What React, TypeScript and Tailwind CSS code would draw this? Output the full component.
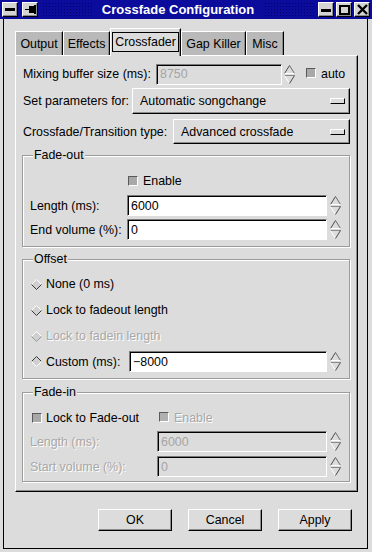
import type { ReactNode } from "react";

const raised =
  "border border-t-white border-l-white border-r-black border-b-black shadow-[inset_-1px_-1px_0_#8c8c8c]";

const Spin = ({ disabled }: { disabled?: boolean }) => (
  <svg width="11" height="21" viewBox="0 0 11 21" className="shrink-0">
    <path d="M0.5 9.5 L5.5 1.5" stroke={disabled ? "#9a9a9a" : "#4a4a4a"} fill="none" />
    <path d="M5.5 1.5 L10.5 9.5" stroke="#6a6a6a" fill="none" />
    <path d="M0.5 9.5 L10.5 9.5" stroke="#ffffff" fill="none" />
    <path d="M0.5 11.5 L10.5 11.5" stroke="#8a8a8a" fill="none" />
    <path d="M0.5 11.5 L5.5 19.5" stroke="#ffffff" fill="none" />
    <path d="M5.5 19.5 L10.5 11.5" stroke="#4a4a4a" fill="none" />
  </svg>
);

const Check = ({ disabled }: { disabled?: boolean }) => (
  <span
    className={`inline-block w-[10px] h-[10px] shrink-0 border border-t-[#5a5a5a] border-l-[#5a5a5a] border-r-white border-b-white ${
      disabled ? "bg-[#b0b0b0]" : "bg-[#a8a8a8]"
    }`}
  />
);

const Radio = ({ on, disabled }: { on?: boolean; disabled?: boolean }) => {
  const light = "#ffffff";
  const dark = disabled ? "#9a9a9a" : "#3a3a3a";
  return (
    <svg width="11" height="11" viewBox="0 0 11 11" className="shrink-0">
      <polygon points="5.5,0.5 10.5,5.5 5.5,10.5 0.5,5.5" fill="#d0d0d0" />
      <path d="M0.5 5.5 L5.5 0.5 L10.5 5.5" stroke={on ? dark : light} fill="none" />
      <path d="M0.5 5.5 L5.5 10.5 L10.5 5.5" stroke={on ? light : dark} fill="none" />
    </svg>
  );
};

const Entry = ({ value, w, disabled }: { value: string; w: string; disabled?: boolean }) => (
  <div
    className={`${w} h-[21px] shrink-0 flex items-center pl-[3px] border border-t-[#7a7a7a] border-l-[#7a7a7a] border-r-white border-b-white shadow-[inset_1px_1px_0_#000] ${
      disabled ? "bg-[#dcdcdc] text-[#a4a4a4]" : "bg-white text-black"
    }`}
  >
    {value}
  </div>
);

const OptionMenu = ({ label }: { label: string }) => (
  <div className={`flex-1 flex items-center justify-between pl-[7px] pr-[4px] ${raised}`}>
    <span>{label}</span>
    <span className={`w-[15px] h-[6px] ${raised} shadow-none`} />
  </div>
);

const Frame = ({ title, children, className }: { title: string; children: ReactNode; className?: string }) => (
  <fieldset
    className={`border border-[#9c9c9c] shadow-[1px_1px_0_#fff,inset_1px_1px_0_#fff] px-[7px] ${className ?? ""}`}
  >
    <legend className="ml-[3px] px-px bg-[#dcdcdc] leading-[14px]">{title}</legend>
    {children}
  </fieldset>
);

const dim = "text-[#a8a8a8] [text-shadow:1px_1px_0_#fff]";

const TitleButton = ({ children }: { children: ReactNode }) => (
  <div className={`w-[16px] h-[15px] bg-[#d4d4d4] flex items-center justify-center ${raised}`}>{children}</div>
);

const Tab = ({ label, w, active }: { label: string; w: string; active?: boolean }) =>
  active ? (
    <div
      className={`${w} relative z-10 -mb-px h-[28px] flex justify-center pt-[3px] bg-[#dcdcdc] border-l border-t border-r border-l-white border-t-white border-r-black shadow-[inset_-1px_0_0_#8c8c8c]`}
    >
      <div className="h-[20px] px-[2px] flex items-center border border-black">{label}</div>
    </div>
  ) : (
    <div
      className={`${w} h-[24px] flex items-center justify-center bg-[#b9b9b9] border-l border-t border-r border-l-white border-t-white border-r-black shadow-[inset_-1px_0_0_#8c8c8c]`}
    >
      {label}
    </div>
  );

export default function App() {
  return (
    <div className="w-[372px] h-[552px] flex flex-col bg-[#dcdcdc] text-[12.4px] leading-[14px] text-black font-['Liberation_Sans',Arial,sans-serif] overflow-hidden">
      {/* title bar */}
      <div className="h-[19px] shrink-0 flex items-center bg-[#0b0b9c] px-[2px] gap-[4px]">
        <TitleButton>
          <span className="w-[10px] h-[3px] bg-black" />
        </TitleButton>
        <TitleButton>
          <svg width="11" height="9" viewBox="0 0 11 9">
            <rect x="0" y="4" width="4" height="1" fill="#000" />
            <rect x="4" y="1" width="5" height="7" fill="#000" />
            <rect x="9" y="0" width="2" height="9" fill="#000" />
          </svg>
        </TitleButton>
        <div className="flex-1 h-[15px] bg-[radial-gradient(circle,#000070_0.9px,transparent_1px)] bg-[length:3px_3px]" />
        <div className="px-[6px] text-white font-bold text-[13px]">Crossfade Configuration</div>
        <div className="flex-1 h-[15px] bg-[radial-gradient(circle,#000070_0.9px,transparent_1px)] bg-[length:3px_3px]" />
        <div className="flex gap-[2px]">
          <TitleButton>
            <span className="w-[10px] h-[3px] bg-black mt-[2px]" />
          </TitleButton>
          <TitleButton>
            <span className="w-[11px] h-[10px] border-2 border-black" />
          </TitleButton>
          <TitleButton>
            <svg width="11" height="11" viewBox="0 0 11 11">
              <path d="M1 1 L10 10 M10 1 L1 10" stroke="#000" strokeWidth="2.4" />
            </svg>
          </TitleButton>
        </div>
      </div>

      {/* window body */}
      <div className="flex-1 flex flex-col border-l-[3px] border-r-[4px] border-b-[3px] border-[#dcdcdc]">
        <div className="flex-1 flex flex-col border-l border-r border-b border-black pl-[11px] pr-[9px] pt-[9px]">
          {/* notebook */}
          <div className="flex items-end h-[27px]">
            <Tab label="Output" w="w-[48px]" />
            <Tab label="Effects" w="w-[47px]" />
            <Tab label="Crossfader" w="w-[71px]" active />
            <Tab label="Gap Killer" w="w-[65px]" />
            <Tab label="Misc" w="w-[38px]" />
          </div>
          <div className="h-[437px] flex flex-col border border-t-white border-l-white border-r-black border-b-black shadow-[inset_-1px_-1px_0_#8c8c8c] pl-[6px] pr-[7px]">
            <div className="mt-[8px] h-[20px] flex items-center">
              <span className="w-[134px] pl-px">Mixing buffer size (ms):</span>
              <Entry value="8750" w="w-[126px]" disabled />
              <span className="ml-[2px]">
                <Spin />
              </span>
              <span className="ml-[11px]">
                <Check />
              </span>
              <span className="ml-[5px]">auto</span>
            </div>
            <div className="mt-[4px] h-[26px] flex items-stretch">
              <span className="w-[110px] pl-px self-center">Set parameters for:</span>
              <OptionMenu label="Automatic songchange" />
            </div>
            <div className="mt-[5px] h-[25px] flex items-stretch">
              <span className="w-[151px] pl-px self-center">Crossfade/Transition type:</span>
              <OptionMenu label="Advanced crossfade" />
            </div>

            <Frame title="Fade-out" className="mt-[4px] pb-[6px]">
              <div className="mt-[12px] h-[14px] flex items-center pl-[98px] gap-[5px]">
                <Check />
                <span>Enable</span>
              </div>
              <div className="mt-[7px] h-[21px] flex items-center">
                <span className="w-[97px]">Length (ms):</span>
                <Entry value="6000" w="w-[200px]" />
                <span className="ml-[3px]">
                  <Spin />
                </span>
              </div>
              <div className="mt-[3px] h-[21px] flex items-center">
                <span className="w-[97px]">End volume (%):</span>
                <Entry value="0" w="w-[200px]" />
                <span className="ml-[3px]">
                  <Spin />
                </span>
              </div>
            </Frame>

            <Frame title="Offset" className="mt-[5px] pb-[6px]">
              <div className="mt-[11px] h-[14px] flex items-center gap-[4px] pl-px">
                <Radio />
                <span>None (0 ms)</span>
              </div>
              <div className="mt-[12px] h-[14px] flex items-center gap-[4px] pl-px">
                <Radio />
                <span>Lock to fadeout length</span>
              </div>
              <div className="mt-[12px] h-[14px] flex items-center gap-[4px] pl-px">
                <Radio disabled />
                <span className={dim}>Lock to fadein length</span>
              </div>
              <div className="mt-[8px] h-[21px] flex items-center">
                <span className="w-[99px] flex items-center gap-[4px] pl-px">
                  <Radio on />
                  <span>Custom (ms):</span>
                </span>
                <Entry value="−8000" w="w-[198px]" />
                <span className="ml-[3px]">
                  <Spin />
                </span>
              </div>
            </Frame>

            <Frame title="Fade-in" className="mt-[6px] pb-[4px]">
              <div className="mt-[12px] h-[14px] flex items-center pl-[2px]">
                <Check />
                <span className="ml-[4px]">Lock to Fade-out</span>
                <span className="ml-[20px]">
                  <Check disabled />
                </span>
                <span className={`ml-[5px] ${dim}`}>Enable</span>
              </div>
              <div className="mt-[6px] h-[21px] flex items-center">
                <span className={`w-[127px] ${dim}`}>Length (ms):</span>
                <Entry value="6000" w="w-[170px]" disabled />
                <span className="ml-[3px]">
                  <Spin />
                </span>
              </div>
              <div className="mt-[4px] h-[21px] flex items-center">
                <span className={`w-[127px] ${dim}`}>Start volume (%):</span>
                <Entry value="0" w="w-[170px]" disabled />
                <span className="ml-[3px]">
                  <Spin />
                </span>
              </div>
            </Frame>
          </div>

          {/* buttons */}
          <div className="mt-[17px] flex justify-end gap-[16px] pr-[6px]">
            {["OK", "Cancel", "Apply"].map((b) => (
              <div key={b} className={`w-[74px] h-[22px] flex items-center justify-center ${raised}`}>
                {b}
              </div>
            ))}
          </div>
        </div>
      </div>
    </div>
  );
}
